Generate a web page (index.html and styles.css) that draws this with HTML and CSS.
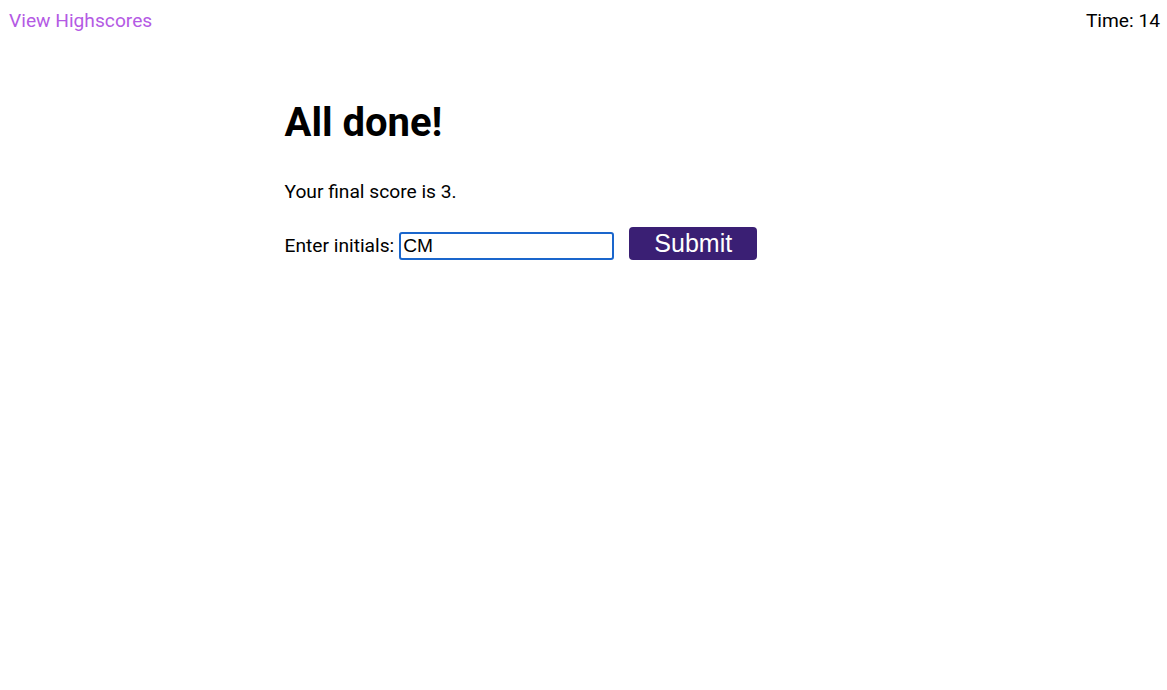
FILE: index.html
```html
<!DOCTYPE html>
<html>
<head>
<meta charset="utf-8">
<link rel="stylesheet" href="styles.css">
</head>
<body>
<header class="top">
  <a class="highscores" href="#">View Highscores</a>
  <div class="timer">Time: 14</div>
</header>
<main class="card">
  <h1 class="title">All done!</h1>
  <p class="score">Your final score is 3.</p>
  <form class="entry">
    <label class="label" for="initials">Enter initials:</label>
    <input id="initials" class="initials" type="text" value="CM">
    <button class="submit" type="button">Submit</button>
  </form>
</main>
</body>
</html>
```
FILE: styles.css
```css
html, body {
  margin: 0;
  padding: 0;
  background: #fff;
  font-family: Roboto, "Liberation Sans", sans-serif;
  color: #000;
}
.top {
  display: flex;
  justify-content: space-between;
  align-items: center;
  padding: 9px 7px 0 9px;
  font-size: 19.2px;
  line-height: 24px;
}
.highscores {
  color: #b45ae4;
  text-decoration: none;
}
.timer {
  color: #000;
}
.card {
  width: 600px;
  margin: 0 auto;
  padding-left: 1px;
  box-sizing: border-box;
}
.title {
  font-size: 40px;
  font-weight: 700;
  margin: 66px 0 0 0;
  line-height: 48px;
}
.score {
  font-size: 19.2px;
  line-height: 24px;
  margin: 33px 0 0 0;
}
.entry {
  display: flex;
  align-items: center;
  margin-top: 23px;
}
.label {
  font-size: 19.2px;
  margin-right: 5px;
  margin-top: 4px;
}
.initials {
  width: 215px;
  height: 28px;
  box-sizing: border-box;
  border: 2px solid #1a66cc;
  border-radius: 3px;
  font-family: "Liberation Sans", Arial, sans-serif;
  font-size: 19.2px;
  padding: 0 2px;
  outline: none;
  margin-top: 5px;
}
.submit {
  margin-left: 15px;
  width: 128px;
  height: 33px;
  background: #3a1f74;
  color: #fff;
  border: none;
  border-radius: 4px;
  font-family: "Liberation Sans", Arial, sans-serif;
  font-size: 25px;
  padding: 0;
}
```
